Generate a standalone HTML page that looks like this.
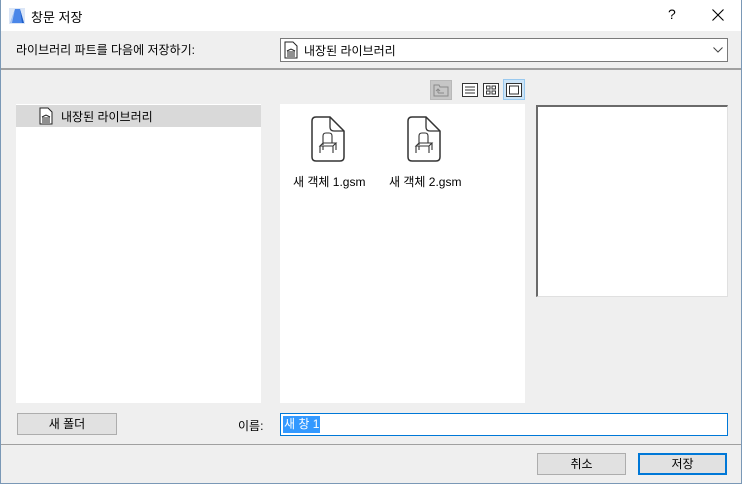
<!DOCTYPE html>
<html><head><meta charset="utf-8"><style>
*{margin:0;padding:0;box-sizing:border-box}
body{width:742px;height:484px;background:#efefef;font-family:"Liberation Sans","Noto Sans CJK KR","NanumGothic",sans-serif;font-size:12px;color:#000;position:relative;overflow:hidden}
.abs{position:absolute}
.win{left:0;top:0;width:742px;height:484px;border:1px solid #7a98b6;border-top:none}
.title{left:1px;top:0;width:740px;height:31px;background:#fff}
.btn{background:#e1e1e1;border:1px solid #adadad;text-align:center;line-height:20px}
</style></head><body>
<div class="abs title"></div>
<div class="abs win"></div>
<svg class="abs" style="left:9px;top:8px" width="16" height="16" viewBox="0 0 16 16"><rect width="16" height="16" fill="#dbe6f7"/><path d="M1 15 L6 1 L11 1 L15 15Z" fill="#4a86e8"/><path d="M6 1 L3 15 L1 15Z" fill="#a9c6f4"/><path d="M11 1 L13 15 L15 15Z" fill="#1f5fc8"/></svg>
<div class="abs" style="left:31px;top:7px;font-size:13px">창문 저장</div>
<div class="abs" style="left:668px;top:6px;font-size:14px">?</div>
<svg class="abs" style="left:712px;top:9px" width="12" height="12"><path d="M0.5 0.5L11.5 11.5M11.5 0.5L0.5 11.5" stroke="#000" stroke-width="1.1"/></svg>

<div class="abs" style="left:16px;top:41px">라이브러리 파트를 다음에 저장하기:</div>
<div class="abs" style="left:280px;top:38px;width:448px;height:24px;background:#fff;border:1px solid #7a7a7a"></div>
<svg class="abs" style="left:284px;top:41px" width="14" height="18" viewBox="0 0 14 18"><path d="M1 1H9L13 5V17H1Z" fill="#fff" stroke="#222"/><path d="M3 10L7 8L11 10M4 10V14M6 10V14M8 10V14M10 10V14M3 15H11" stroke="#222" fill="none"/></svg>
<div class="abs" style="left:304px;top:42px">내장된 라이브러리</div>
<svg class="abs" style="left:713px;top:47px" width="10" height="6"><path d="M0.5 0.5L5 5L9.5 0.5" stroke="#444" fill="none"/></svg>
<div class="abs" style="left:1px;top:68px;width:740px;height:2px;background:#a0a0a0"></div>

<div class="abs" style="left:430px;top:80px;width:22px;height:20px;background:#c6c6c6;border:1px solid #b8b8b8"></div>
<svg class="abs" style="left:433px;top:83px" width="16" height="14"><path d="M1 2H6L7 4H15V13H1Z" fill="none" stroke="#8a8a8a"/><path d="M5 10H11M5 10V6M3 8L5 6L7 8" stroke="#8a8a8a" fill="none"/></svg>
<svg class="abs" style="left:462px;top:83px" width="16" height="14"><rect x="0.5" y="0.5" width="15" height="13" fill="#fff" stroke="#333"/><path d="M3 4H13M3 7H13M3 10H13" stroke="#333"/></svg>
<svg class="abs" style="left:483px;top:83px" width="16" height="14"><rect x="0.5" y="0.5" width="15" height="13" fill="#fff" stroke="#333"/><rect x="3.5" y="3" width="3.5" height="3" fill="none" stroke="#333"/><rect x="9" y="3" width="3.5" height="3" fill="none" stroke="#333"/><rect x="3.5" y="8" width="3.5" height="3" fill="none" stroke="#333"/><rect x="9" y="8" width="3.5" height="3" fill="none" stroke="#333"/></svg>
<div class="abs" style="left:503px;top:79px;width:22px;height:21px;background:#cce4f7;border:1px solid #99c9ef"></div>
<svg class="abs" style="left:506px;top:83px" width="16" height="14"><rect x="0.5" y="0.5" width="15" height="13" fill="#fff" stroke="#333"/><rect x="3.5" y="3" width="9" height="8" fill="none" stroke="#333"/></svg>

<div class="abs" style="left:16px;top:104px;width:245px;height:299px;background:#fff"></div>
<div class="abs" style="left:16px;top:105px;width:245px;height:22px;background:#d9d9d9"></div>
<svg class="abs" style="left:39px;top:107px" width="14" height="18" viewBox="0 0 14 18"><path d="M1 1H9L13 5V17H1Z" fill="#fff" stroke="#222"/><path d="M3 10L7 8L11 10M4 10V14M6 10V14M8 10V14M10 10V14M3 15H11" stroke="#222" fill="none"/></svg>
<div class="abs" style="left:61px;top:108px">내장된 라이브러리</div>

<div class="abs" style="left:280px;top:104px;width:245px;height:299px;background:#fff"></div>
<svg class="abs" style="left:311px;top:116px" width="34" height="46" viewBox="0 0 34 46"><path d="M5 1H19L33 15V41Q33 45 29 45H5Q1 45 1 41V5Q1 1 5 1Z" fill="#fff" stroke="#333" stroke-width="1.5"/><path d="M19 1V11Q19 15 23 15H33" fill="none" stroke="#333" stroke-width="1.3"/><path d="M12 29V20Q12 17 15 17H18Q21 17 21 20V27M9 30L12 27H25L22 30ZM9 30V37M22 30V37M25 27V34M12 30V34" fill="none" stroke="#333" stroke-width="1.1"/></svg>
<svg class="abs" style="left:407px;top:116px" width="34" height="46" viewBox="0 0 34 46"><path d="M5 1H19L33 15V41Q33 45 29 45H5Q1 45 1 41V5Q1 1 5 1Z" fill="#fff" stroke="#333" stroke-width="1.5"/><path d="M19 1V11Q19 15 23 15H33" fill="none" stroke="#333" stroke-width="1.3"/><path d="M12 29V20Q12 17 15 17H18Q21 17 21 20V27M9 30L12 27H25L22 30ZM9 30V37M22 30V37M25 27V34M12 30V34" fill="none" stroke="#333" stroke-width="1.1"/></svg>
<div class="abs" style="left:293px;top:173px">새 객체 1.gsm</div>
<div class="abs" style="left:389px;top:173px">새 객체 2.gsm</div>

<div class="abs" style="left:536px;top:105px;width:192px;height:192px;background:#fff;border:1px solid #e0e0e0;border-left:2px solid #6a6a6a;border-top:2px solid #6a6a6a"></div>

<div class="abs btn" style="left:17px;top:413px;width:100px;height:22px">새 폴더</div>
<div class="abs" style="left:238px;top:417px">이름:</div>
<div class="abs" style="left:280px;top:413px;width:448px;height:23px;background:#fff;border:1px solid #0078d7"></div>
<div class="abs" style="left:283px;top:416px;height:17px;line-height:17px;background:#3399ff;color:#fff;padding:0 1px">새 창 1</div>
<div class="abs" style="left:1px;top:444px;width:740px;height:1px;background:#a0a0a0"></div>
<div class="abs btn" style="left:537px;top:453px;width:89px;height:22px">취소</div>
<div class="abs btn" style="left:638px;top:453px;width:89px;height:22px;border:2px solid #0078d7;line-height:18px">저장</div>
</body></html>
